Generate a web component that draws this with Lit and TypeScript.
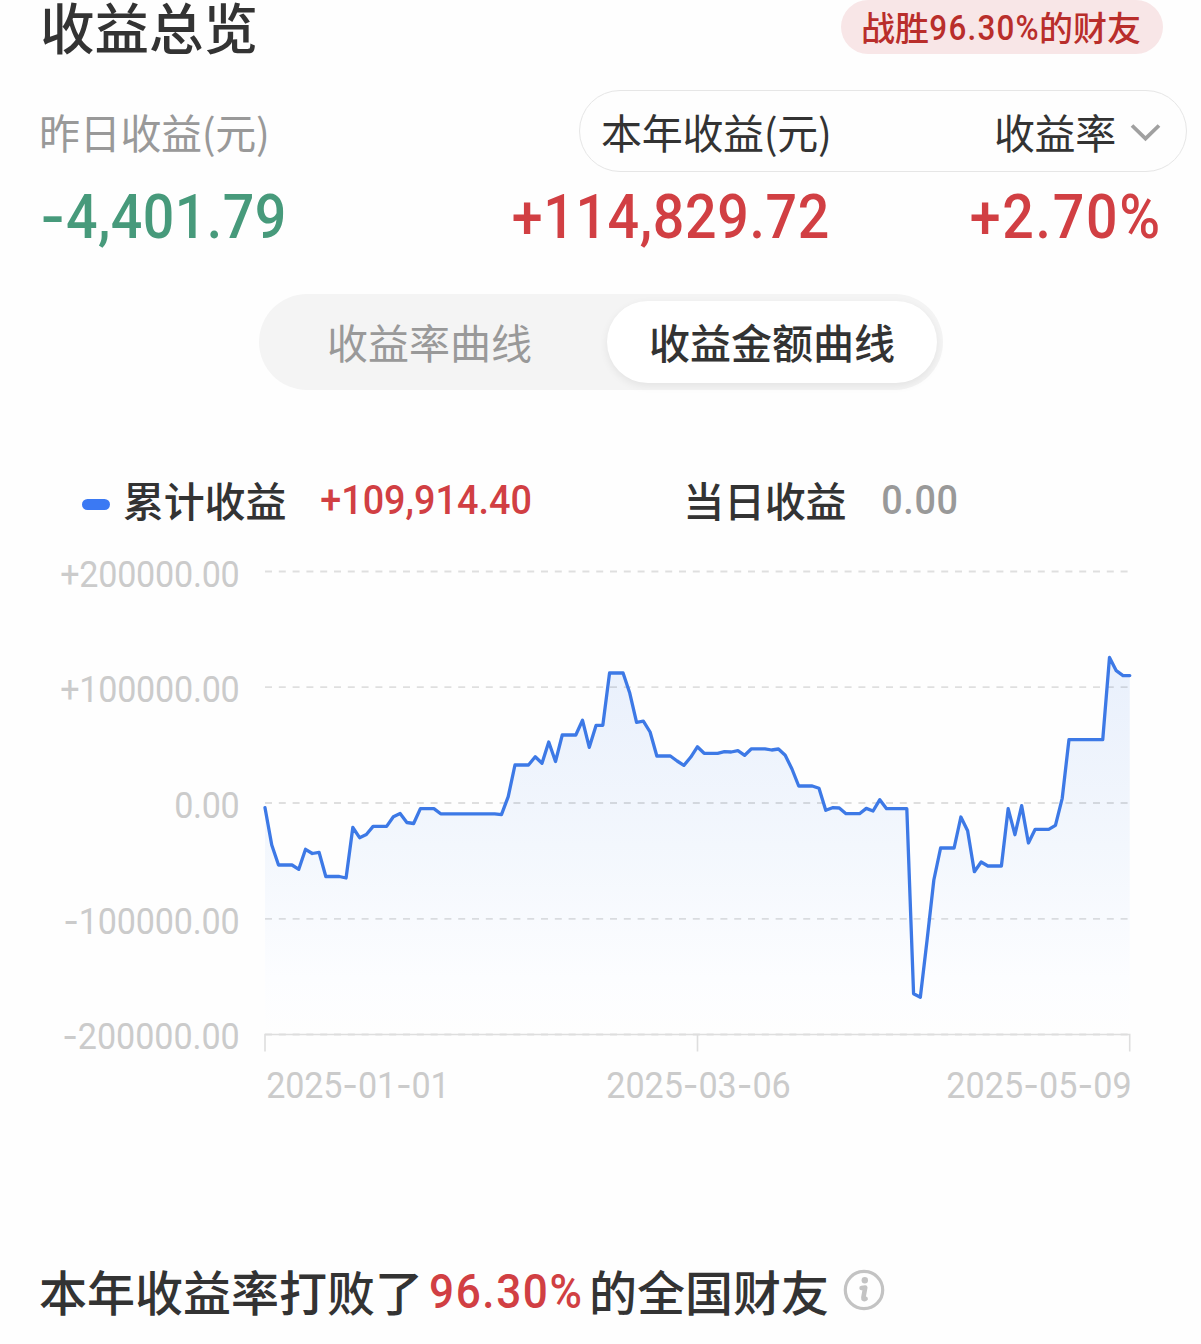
import { LitElement, html, svg, css } from "lit";
import { customElement, property } from "lit/decorators.js";

const FLOOR = 1034.5;
const TOP = 560;
const LEFT = 255;
const STEP = 6.756;

/* Curve heights, one per day from 2025-01-01 to 2025-05-09. */
const CURVE = [
  807.7, 845, 865, 865, 865, 869.3, 849.3, 853.5, 852.3, 876.5, 876.5, 876.5, 878, 827.5, 837.7, 834.5,
  826.4, 826.4, 826.4, 816.7, 813.5, 822.5, 823.5, 808.6, 808.6, 808.6, 813.8, 813.8, 813.8, 813.8, 813.8,
  813.8, 813.8, 813.8, 813.8, 814.6, 796.7, 765, 765, 765, 756.8, 763.3, 742, 761.5, 735, 735, 735, 720.3,
  747.3, 725.4, 725.4, 673, 673, 673, 693.3, 722.3, 721.2, 732, 756, 756, 756, 761, 765.4, 757.3, 746.8,
  753.3, 753.3, 753.3, 751.7, 752, 750.7, 755.3, 748.8, 748.8, 748.8, 750, 749, 755.3, 769, 786, 786, 786,
  788.3, 810.3, 807.7, 808, 813.7, 813.7, 813.7, 808.4, 811, 799.7, 808.7, 808.7, 808.7, 808.7, 993.7,
  997.3, 940, 880, 848, 848, 848, 817, 830.7, 871.7, 862, 866, 866, 866, 808.7, 834.7, 805.7, 843, 829.3,
  829.3, 829.3, 825.3, 798.3, 739.7, 739.7, 739.7, 739.7, 739.7, 739.7, 657.5, 670.7, 675.6, 675.6,
];

/* A figure set in slightly condensed digits and spaced out to a given width. */
@customElement("figure-text")
class FigureText extends LitElement {
  static styles = css`
    :host { display: inline-block; }
    svg { display: block; overflow: visible; }
    text { fill: currentColor; font-family: Roboto, sans-serif; }
    .dash { font-family: Inter, sans-serif; }
  `;
  @property() value = "";
  @property({ type: Number }) size = 37;
  @property({ type: Number }) width = 100;
  @property({ type: Number }) weight = 400;
  @property({ type: Number }) squeeze = 0.91;
  render() {
    const { value, size, width, weight, squeeze } = this;
    const bearing = size * 0.02;
    const parts = value.split(/(-)/).filter((p) => p);
    return html`<svg width=${width} height=${size} viewBox="0 0 ${width} ${size}">
      <text transform="translate(${-bearing} ${size * 0.8555}) scale(${squeeze} 1)" font-size=${size} font-weight=${weight}
        textLength=${(width + bearing * 2) / squeeze} lengthAdjust="spacing">${parts.map((p) =>
          p === "-" ? svg`<tspan class="dash">-</tspan>` : svg`<tspan>${p}</tspan>`)}</text>
    </svg>`;
  }
}

const AXIS: [string, number][] = [
  ["+200000.00", 178], ["+100000.00", 178], ["0.00", 64], ["-100000.00", 175], ["-200000.00", 176],
];

@customElement("profit-chart")
class ProfitChart extends LitElement {
  static styles = css`
    :host { display: block; color: #cbcbcb; }
    .plot { display: grid; grid-template-columns: 239px 16px 1fr; height: 500px; }
    .scale { display: flex; flex-direction: column; }
    .tick { display: flex; align-items: center; justify-content: flex-end; height: 27px; margin-bottom: 88.6px; flex: none; }
    .canvas { grid-column: 3; display: block; }
    .dates { display: flex; justify-content: space-between; align-items: center; height: 50px; padding: 0 70px 2px 267px; }
  `;
  render() {
    const pts = CURVE.map((y, i) => `${(265 - LEFT + i * STEP).toFixed(2)},${(y - TOP).toFixed(1)}`).join(" ");
    const base = FLOOR - TOP;
    const end = 1129.7 - LEFT;
    return html`
      <div class="plot">
        <div class="scale">
          ${AXIS.map(([t, w]) => html`<div class="tick"><figure-text value=${t} width=${w} size="37.5"></figure-text></div>`)}
        </div>
        <svg class="canvas" width="900" height="500" viewBox="0 0 900 500">
          <defs>
            <linearGradient id="fade" gradientUnits="userSpaceOnUse" x1="0" y1="97" x2="0" y2=${base}>
              <stop offset="0" stop-color="#e9f0fc" />
              <stop offset="0.5" stop-color="#f3f7fd" />
              <stop offset="0.85" stop-color="#fcfdff" />
              <stop offset="1" stop-color="#fefefe" />
            </linearGradient>
          </defs>
          <polygon points="10,${base} ${pts} ${end},${base}" fill="url(#fade)" />
          ${[571.5, 687.2, 803, 918.8, FLOOR].map(
            (y) => svg`<line x1="10" x2="873" y1=${y - TOP} y2=${y - TOP} stroke="#000" stroke-opacity=".12" stroke-width="1.8" stroke-dasharray="7 6.8" />`
          )}
          <path d="M10 491.5V${base}H${end}V491.5M442.5 ${base}V491.5" fill="none" stroke="#dedede" stroke-width="1.6" />
          <polyline points=${pts} fill="none" stroke="#3d79e6" stroke-width="3.3" stroke-linejoin="round" stroke-linecap="round" />
        </svg>
      </div>
      <div class="dates">
        <figure-text value="2025-01-01" width="182" size="37.5"></figure-text>
        <figure-text value="2025-03-06" width="183" size="37.5"></figure-text>
        <figure-text value="2025-05-09" width="184" size="37.5"></figure-text>
      </div>
    `;
  }
}

@customElement("app-root")
class AppRoot extends LitElement {
  static styles = css`
    :host {
      display: block; width: 1201px; height: 1344px; overflow: hidden; background: #fefefe; color: #333;
      font-family: "Noto Sans CJK SC", sans-serif; white-space: nowrap;
    }
    .header { display: flex; justify-content: space-between; height: 54px; padding: 0 38px 0 40px; }
    .title { font-size: 54.5px; line-height: 51px; font-weight: 500; }
    .badge { box-sizing: border-box; display: flex; align-items: center; width: 322px; height: 54px; padding-left: 20px; line-height: 52px; border-radius: 27px; background: #f8e6e7; color: #b92e2b; font-size: 34px; font-weight: 500; }
    .rank { margin: 0 1px; }
    .labels { display: flex; justify-content: space-between; align-items: center; height: 82px; margin-top: 36px; padding: 0 14px 0 39px; font-size: 41px; line-height: 79px; letter-spacing: -0.3px; }
    .muted { color: #999; }
    .picker { box-sizing: border-box; display: flex; align-items: center; width: 608px; height: 82px; border: 1.5px solid #e6e6e6; border-radius: 41px; padding: 0 25px 0 21px; }
    .rate { margin-left: auto; margin-right: 13px; }
    .values { display: grid; grid-template-columns: 387px 400px 331px; align-items: center; padding-left: 41px; height: 89px; }
    .down { color: #479a7b; }
    .up { color: #d13f43; }
    .end { justify-self: end; }
    .tabs { box-sizing: border-box; display: flex; width: 684px; height: 96px; margin: 33px 0 0 259px; padding: 7px 6px; border-radius: 48px; background: #f4f4f4; font-size: 41px; line-height: 81px; text-align: center; }
    .tab { flex: 1; color: #999; padding-right: 13px; }
    .active { flex: none; padding: 0; width: 330px; height: 82px; border-radius: 41px; background: #fff; color: #333; font-weight: 500; box-shadow: 0 3px 8px rgba(0,0,0,.07); }
    .legend { display: flex; align-items: center; height: 58px; line-height: 56px; margin-top: 80px; padding-left: 82px; font-size: 41px; font-weight: 500; letter-spacing: -0.2px; }
    .key { width: 28px; height: 11px; border-radius: 5.5px; background: #3b79f3; margin: 11px 13px 0 0; }
    .sum { display: flex; margin-left: 35px; width: 362px; }
    .day { margin-left: 36px; color: #999; }
    .chart { margin-top: 32px; }
    .footer { display: flex; align-items: center; height: 70px; line-height: 65px; margin-top: 143px; padding-left: 39px; font-size: 48px; font-weight: 500; }
    .pct { margin: 2px 8px 0 7px; }
    .info { margin-left: 14px; }
  `;
  render() {
    return html`
      <div class="header">
        <div class="title">收益总览</div>
        <div class="badge"><span>战胜</span><figure-text class="rank" value="96.30%" width="108" size="34.5" weight="500"></figure-text><span>的财友</span></div>
      </div>
      <div class="labels">
        <span class="muted">昨日收益(元)</span>
        <div class="picker">
          <span>本年收益(元)</span>
          <span class="rate">收益率</span>
          <svg width="32" height="22" viewBox="0 0 32 22"><path d="M3 5.5 16.5 18.5 30 5.5" fill="none" stroke="#a0a0a0" stroke-width="3.8" /></svg>
        </div>
      </div>
      <div class="values">
        <figure-text class="down" value="-4,401.79" width="244" size="61" weight="500"></figure-text>
        <figure-text class="up end" value="+114,829.72" width="315" size="61" weight="500"></figure-text>
        <figure-text class="up end" value="+2.70%" width="188" size="61" weight="500"></figure-text>
      </div>
      <div class="tabs">
        <div class="tab">收益率曲线</div>
        <div class="tab active">收益金额曲线</div>
      </div>
      <div class="legend">
        <span class="key"></span>
        <span>累计收益</span>
        <span class="sum"><figure-text class="up" value="+109,914.40" width="210" size="41.5" weight="500"></figure-text></span>
        <span>当日收益</span>
        <figure-text class="day" value="0.00" width="75" size="41.5" weight="500"></figure-text>
      </div>
      <profit-chart class="chart"></profit-chart>
      <div class="footer">
        <span>本年收益率打败了</span>
        <figure-text class="up pct" value="96.30%" width="151" size="48.5" weight="500"></figure-text>
        <span>的全国财友</span>
        <svg class="info" width="42" height="42" viewBox="0 0 42 42">
          <circle cx="21" cy="21" r="18.7" fill="none" stroke="#c3c3c3" stroke-width="3.2" />
          <circle cx="21.8" cy="11.3" r="3.2" fill="#c3c3c3" />
          <path d="M18.6 19 22.2 18.6 20.4 28.6Q20.1 31 22.6 29.8" fill="none" stroke="#c3c3c3" stroke-width="4.6" stroke-linejoin="round" stroke-linecap="round" />
        </svg>
      </div>
    `;
  }
}
